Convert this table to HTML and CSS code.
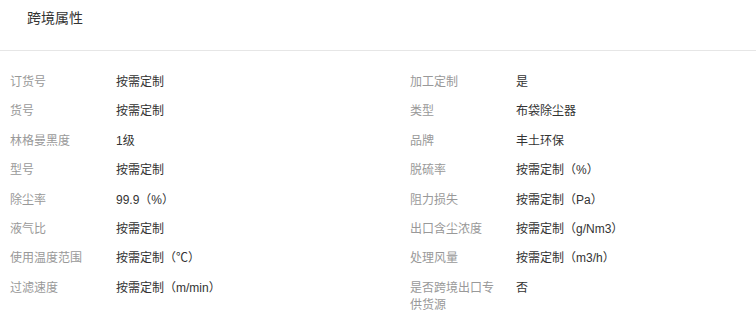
FILE: index.html
```html
<!DOCTYPE html>
<html lang="zh-CN">
<head>
<meta charset="utf-8">
<link rel="stylesheet" href="styles.css">
</head>
<body>
<div class="panel">
  <div class="panel-head"><span class="title">跨境属性</span></div>
  <div class="attrs">
    <div class="row"><span class="label">订货号</span><span class="value">按需定制</span></div>
    <div class="row"><span class="label">加工定制</span><span class="value">是</span></div>
    <div class="row"><span class="label">货号</span><span class="value">按需定制</span></div>
    <div class="row"><span class="label">类型</span><span class="value">布袋除尘器</span></div>
    <div class="row"><span class="label">林格曼黑度</span><span class="value">1级</span></div>
    <div class="row"><span class="label">品牌</span><span class="value">丰土环保</span></div>
    <div class="row"><span class="label">型号</span><span class="value">按需定制</span></div>
    <div class="row"><span class="label">脱硫率</span><span class="value">按需定制（%）</span></div>
    <div class="row"><span class="label">除尘率</span><span class="value">99.9（%）</span></div>
    <div class="row"><span class="label">阻力损失</span><span class="value">按需定制（Pa）</span></div>
    <div class="row"><span class="label">液气比</span><span class="value">按需定制</span></div>
    <div class="row"><span class="label">出口含尘浓度</span><span class="value">按需定制（g/Nm3）</span></div>
    <div class="row"><span class="label">使用温度范围</span><span class="value">按需定制（℃）</span></div>
    <div class="row"><span class="label">处理风量</span><span class="value">按需定制（m3/h）</span></div>
    <div class="row"><span class="label">过滤速度</span><span class="value">按需定制（m/min）</span></div>
    <div class="row"><span class="label">是否跨境出口专供货源</span><span class="value">否</span></div>
  </div>
</div>
</body>
</html>
```
FILE: styles.css
```css
html, body {
  margin: 0;
  padding: 0;
  background: #fff;
}
body {
  font-family: "Liberation Sans", "Noto Sans CJK SC", sans-serif;
  color: #333;
}
.panel-head {
  height: 51px;
  border-bottom: 1px solid #e6e6e6;
  padding: 8px 0 0 27px;
  box-sizing: border-box;
}
.title {
  font-size: 14px;
  line-height: 20px;
  color: #333;
}
.attrs {
  display: grid;
  grid-template-columns: 400px 1fr;
  row-gap: 12.4px;
  padding: 23px 0 0 10px;
}
.row {
  display: flex;
  font-size: 12px;
  line-height: 17px;
}
.label {
  width: 90px;
  margin-right: 16px;
  color: #999;
  flex: none;
}
.value {
  color: #333;
}
```
